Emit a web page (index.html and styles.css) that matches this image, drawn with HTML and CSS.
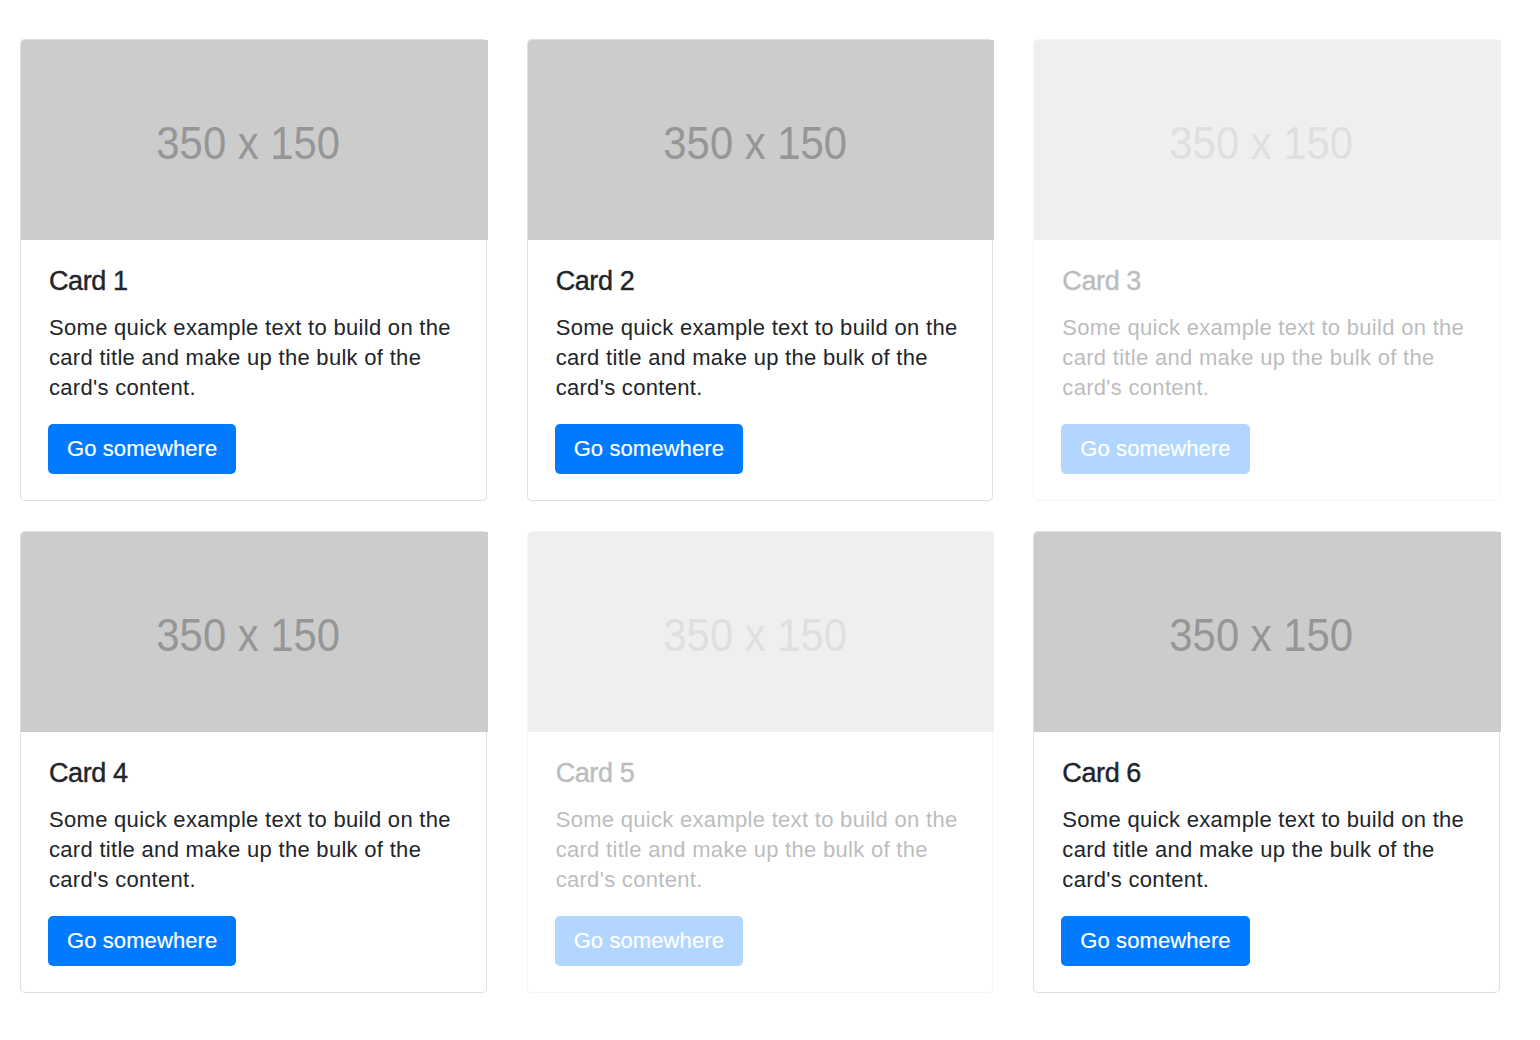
FILE: index.html
```html
<!DOCTYPE html>
<html lang="en">
<head>
    <meta charset="UTF-8">
    <meta name="viewport" content="width=device-width, initial-scale=1.0">
    <title>Cards</title>
    <link rel="stylesheet" href="styles.css">
</head>
<body>
    <div class="card-grid">
        <div class="card">
            <div class="card-img"><span class="card-img-label">350 x 150</span></div>
            <div class="card-body">
                <h5 class="card-title">Card 1</h5>
                <p class="card-text">Some quick example text to build on the card title and make up the bulk of the card's content.</p>
                <a href="#" class="btn">Go somewhere</a>
            </div>
        </div>
        <div class="card">
            <div class="card-img"><span class="card-img-label">350 x 150</span></div>
            <div class="card-body">
                <h5 class="card-title">Card 2</h5>
                <p class="card-text">Some quick example text to build on the card title and make up the bulk of the card's content.</p>
                <a href="#" class="btn">Go somewhere</a>
            </div>
        </div>
        <div class="card faded">
            <div class="card-img"><span class="card-img-label">350 x 150</span></div>
            <div class="card-body">
                <h5 class="card-title">Card 3</h5>
                <p class="card-text">Some quick example text to build on the card title and make up the bulk of the card's content.</p>
                <a href="#" class="btn">Go somewhere</a>
            </div>
        </div>
        <div class="card">
            <div class="card-img"><span class="card-img-label">350 x 150</span></div>
            <div class="card-body">
                <h5 class="card-title">Card 4</h5>
                <p class="card-text">Some quick example text to build on the card title and make up the bulk of the card's content.</p>
                <a href="#" class="btn">Go somewhere</a>
            </div>
        </div>
        <div class="card faded">
            <div class="card-img"><span class="card-img-label">350 x 150</span></div>
            <div class="card-body">
                <h5 class="card-title">Card 5</h5>
                <p class="card-text">Some quick example text to build on the card title and make up the bulk of the card's content.</p>
                <a href="#" class="btn">Go somewhere</a>
            </div>
        </div>
        <div class="card">
            <div class="card-img"><span class="card-img-label">350 x 150</span></div>
            <div class="card-body">
                <h5 class="card-title">Card 6</h5>
                <p class="card-text">Some quick example text to build on the card title and make up the bulk of the card's content.</p>
                <a href="#" class="btn">Go somewhere</a>
            </div>
        </div>
    </div>
</body>
</html>
```

FILE: styles.css
```css
body {
    margin: 0;
    background: #fff;
    color: #212529;
    font-family: 'Liberation Sans', Arial, sans-serif;
}

.card-grid {
    display: grid;
    grid-template-columns: repeat(3, 1fr);
    column-gap: 40px;
    row-gap: 30px;
    padding: 39px 40px 0 20px;
}

.card {
    background: #fff;
    border: 1px solid rgba(0, 0, 0, 0.125);
    border-radius: 5px;
}

.card.faded {
    opacity: 0.3;
}

.card-img {
    width: calc(100% + 2px);
    height: 200px;
    background: #ccc;
    border-top-left-radius: 4px;
    display: flex;
    justify-content: center;
    align-items: center;
    padding: 4px 12px 0 0;
    box-sizing: border-box;
}

.card-img-label {
    font-size: 47px;
    color: #969696;
    transform: scaleX(0.89);
    white-space: nowrap;
}

.card-body {
    padding: 25px 27px 26px 28px;
}

.card-title {
    margin: 0 0 16px;
    font-size: 27px;
    font-weight: 400;
    line-height: 32px;
    letter-spacing: -0.4px;
    -webkit-text-stroke: 0.4px currentColor;
}

.card-text {
    margin: 0 0 21px;
    font-size: 22px;
    line-height: 30px;
    letter-spacing: 0.3px;
}

.btn {
    display: inline-block;
    margin-left: -1px;
    padding: 10px 19px;
    background: #007bff;
    color: #fff;
    border-radius: 5px;
    font-size: 22px;
    line-height: 30px;
    letter-spacing: 0.1px;
    text-decoration: none;
    -webkit-text-stroke: 0.2px currentColor;
}
```
